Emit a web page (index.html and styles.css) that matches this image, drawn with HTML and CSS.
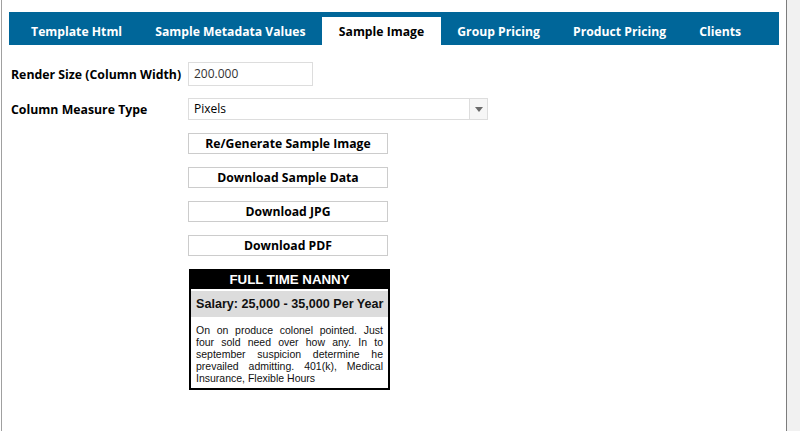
FILE: index.html
```html
<!DOCTYPE html>
<html lang="en">
<head>
<meta charset="utf-8">
<title>Sample Image</title>
<link rel="stylesheet" href="styles.css">
</head>
<body>
<div class="main">
  <div class="panel">
    <ul class="tabs">
      <li class="tab">Template Html</li>
      <li class="tab">Sample Metadata Values</li>
      <li class="tab active">Sample Image</li>
      <li class="tab">Group Pricing</li>
      <li class="tab">Product Pricing</li>
      <li class="tab">Clients</li>
    </ul>
    <div class="form">
      <div class="row">
        <label class="label">Render Size (Column Width)</label>
        <div class="input">200.000</div>
      </div>
      <div class="row row-select">
        <label class="label">Column Measure Type</label>
        <div class="select">
          <span class="select-value">Pixels</span>
          <span class="select-arrow">
            <svg width="8" height="5" viewBox="0 0 8 5"><path d="M0 0H8L4 5Z" fill="#6b6b6b"/></svg>
          </span>
        </div>
      </div>
      <div class="actions">
        <button class="btn">Re/Generate Sample Image</button>
        <button class="btn">Download Sample Data</button>
        <button class="btn">Download JPG</button>
        <button class="btn">Download PDF</button>
        <div class="ad">
          <div class="ad-title">FULL TIME NANNY</div>
          <div class="ad-salary">Salary: 25,000 - 35,000 Per Year</div>
          <div class="ad-body">On on produce colonel pointed. Just four sold need over how any. In to september suspicion determine he prevailed admitting. 401(k), Medical Insurance, Flexible Hours</div>
        </div>
      </div>
    </div>
  </div>
</div>
</body>
</html>
```
FILE: styles.css
```css
html, body {
  margin: 0;
  padding: 0;
}
body {
  background: #f1f1f1;
  font-family: "Open Sans", "Noto Sans", sans-serif;
  color: #000;
}
.main {
  width: 787px;
  min-height: 431px;
  background: #fff;
  padding-left: 1px;
  box-sizing: border-box;
  display: flex;
}
.panel {
  flex: 1;
  border-left: 1px solid #a0a0a0;
  border-right: 1px solid #7c7c7c;
  padding-top: 12px;
}
.tabs {
  list-style: none;
  margin: 0 7px 0 7px;
  padding: 5px 0 0 5.5px;
  height: 33px;
  box-sizing: border-box;
  background: #006699;
  display: flex;
}
.tab {
  height: 28px;
  line-height: 29px;
  padding: 0 16.6px;
  color: #fff;
  font-size: 12.2px;
  font-weight: 700;
  white-space: nowrap;
}
.tab.active {
  background: #fff;
  color: #000;
}
.form {
  padding: 17px 0 0 8px;
}
.row {
  display: flex;
  align-items: center;
}
.row-select {
  margin-top: 12px;
}
.label {
  width: 177px;
  font-size: 12.3px;
  font-weight: 700;
  white-space: nowrap;
  padding-left: 1px;
}
.input {
  width: 125px;
  height: 24px;
  box-sizing: border-box;
  border: 1px solid #dddddd;
  padding-left: 5px;
  font-size: 12px;
  line-height: 22px;
  color: #333;
}
.select {
  width: 300px;
  height: 22px;
  box-sizing: border-box;
  border: 1px solid #dddddd;
  display: flex;
  font-size: 12px;
  line-height: 20px;
}
.select-value {
  flex: 1;
  padding-left: 5px;
}
.select-arrow {
  width: 17px;
  background: #f6f6f6;
  border-left: 1px solid #dddddd;
  display: flex;
  align-items: center;
  justify-content: center;
}
.actions {
  margin-left: 178px;
  padding-top: 13px;
  display: flex;
  flex-direction: column;
  align-items: flex-start;
}
.btn {
  width: 200px;
  height: 21px;
  margin: 0 0 13px 0;
  padding: 0;
  box-sizing: border-box;
  border: 1px solid #cccccc;
  background: #fff;
  font-family: "Open Sans", "Noto Sans", sans-serif;
  font-size: 12.2px;
  font-weight: 700;
  color: #000;
  line-height: 19px;
}
.ad {
  margin-left: 1px;
  width: 201px;
  box-sizing: border-box;
  border: 2px solid #000;
  font-family: "Liberation Sans", Arial, sans-serif;
  background: #fff;
}
.ad-title {
  background: #000;
  color: #fff;
  height: 18px;
  line-height: 18px;
  text-align: center;
  font-size: 13.3px;
  font-weight: 700;
}
.ad-salary {
  margin-top: 2px;
  height: 26px;
  line-height: 26px;
  background: #dcdcdc;
  padding-left: 5px;
  font-size: 12.6px;
  font-weight: 700;
  color: #111;
  white-space: nowrap;
}
.ad-body {
  padding: 7px 5px 4px 5px;
  font-size: 10.5px;
  line-height: 12px;
  text-align: justify;
  color: #111;
}
```
